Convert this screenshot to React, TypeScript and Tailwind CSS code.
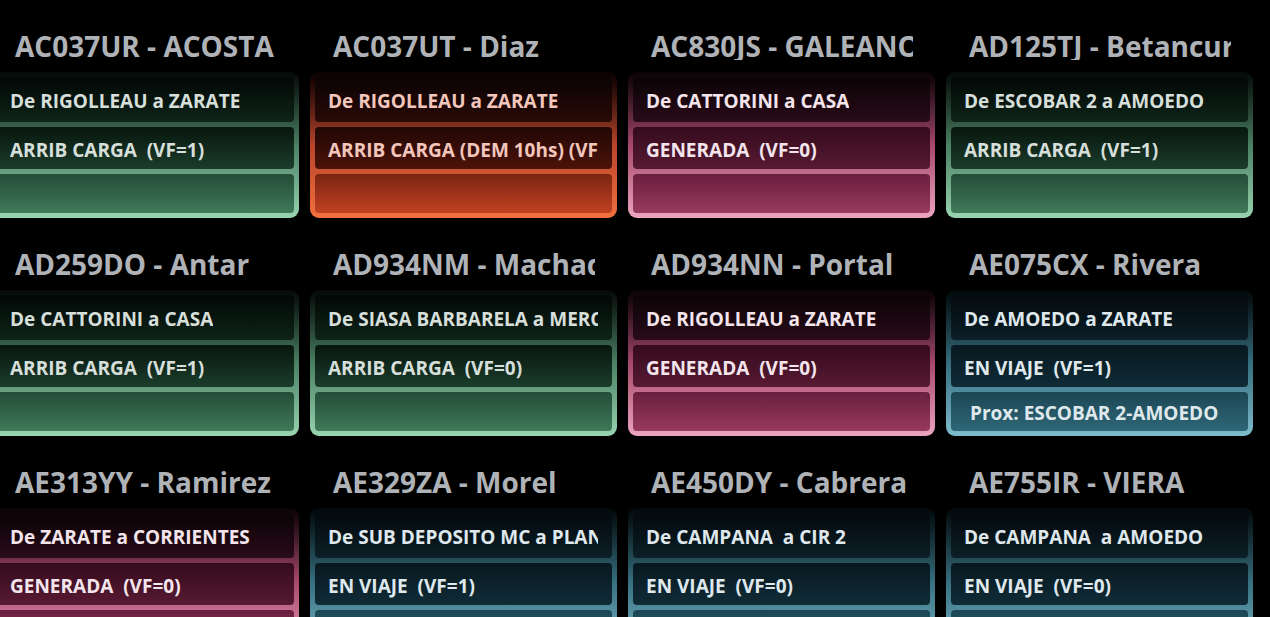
import React from 'react';

type Theme = {
  card: string;
  b1: string;
  b2: string;
  b3: string;
  text: string;
};

const themes: Record<string, Theme> = {
  green: {
    card: 'from-[#050a07] via-[#4a8063] to-[#98d4b0]',
    b1: 'from-[#030806] to-[#0f2419]',
    b2: 'from-[#08170f] to-[#1b3d2b]',
    b3: 'from-[#244c37] to-[#3f7a5a]',
    text: 'text-[#d6dfda]',
  },
  red: {
    card: 'from-[#0a0202] via-[#b8442a] to-[#f2703e]',
    b1: 'from-[#0a0303] to-[#2a0b07]',
    b2: 'from-[#220705] to-[#4c1309]',
    b3: 'from-[#7a2412] to-[#c24222]',
    text: 'text-[#f3c6bc]',
  },
  pink: {
    card: 'from-[#0a0306] via-[#a6486c] to-[#eba4c0]',
    b1: 'from-[#0b0407] to-[#2a0b19]',
    b2: 'from-[#350b1c] to-[#581a33]',
    b3: 'from-[#6a1f3e] to-[#983a5c]',
    text: 'text-[#f4e5ec]',
  },
  blue: {
    card: 'from-[#03080a] via-[#356e7e] to-[#7ebccd]',
    b1: 'from-[#040a0e] to-[#0c1f27]',
    b2: 'from-[#081820] to-[#102c37]',
    b3: 'from-[#1c4654] to-[#2f6777]',
    text: 'text-[#dfe8ec]',
  },
};

type Trip = {
  title: string;
  route: string;
  status: string;
  next?: string;
  theme: keyof typeof themes;
};

const trips: Trip[] = [
  { title: 'AC037UR - ACOSTA', route: 'De RIGOLLEAU a ZARATE', status: 'ARRIB CARGA  (VF=1)', theme: 'green' },
  { title: 'AC037UT - Diaz', route: 'De RIGOLLEAU a ZARATE', status: 'ARRIB CARGA (DEM 10hs) (VF=1)', theme: 'red' },
  { title: 'AC830JS - GALEANO', route: 'De CATTORINI a CASA', status: 'GENERADA  (VF=0)', theme: 'pink' },
  { title: 'AD125TJ - Betancur', route: 'De ESCOBAR 2 a AMOEDO', status: 'ARRIB CARGA  (VF=1)', theme: 'green' },
  { title: 'AD259DO - Antar', route: 'De CATTORINI a CASA', status: 'ARRIB CARGA  (VF=1)', theme: 'green' },
  { title: 'AD934NM - Machado', route: 'De SIASA BARBARELA a MERCEDES', status: 'ARRIB CARGA  (VF=0)', theme: 'green' },
  { title: 'AD934NN - Portal', route: 'De RIGOLLEAU a ZARATE', status: 'GENERADA  (VF=0)', theme: 'pink' },
  { title: 'AE075CX - Rivera', route: 'De AMOEDO a ZARATE', status: 'EN VIAJE  (VF=1)', next: 'Prox: ESCOBAR 2-AMOEDO', theme: 'blue' },
  { title: 'AE313YY - Ramirez', route: 'De ZARATE a CORRIENTES', status: 'GENERADA  (VF=0)', theme: 'pink' },
  { title: 'AE329ZA - Morel', route: 'De SUB DEPOSITO MC a PLANTA', status: 'EN VIAJE  (VF=1)', theme: 'blue' },
  { title: 'AE450DY - Cabrera', route: 'De CAMPANA  a CIR 2', status: 'EN VIAJE  (VF=0)', theme: 'blue' },
  { title: 'AE755IR - VIERA', route: 'De CAMPANA  a AMOEDO', status: 'EN VIAJE  (VF=0)', theme: 'blue' },
];

function Row({ className, children }: { className: string; children?: React.ReactNode }) {
  return (
    <div className={`flex items-center rounded-[4px] bg-gradient-to-b pl-[13px] pr-[14px] pt-[3px] ${className}`}>
      <div className="min-w-0 overflow-hidden whitespace-pre text-[19px] leading-[24px] font-bold">{children}</div>
    </div>
  );
}

function Tile({ trip }: { trip: Trip }) {
  const t = themes[trip.theme];

  return (
    <div className="flex flex-col h-[218px]">
      {/* Plate + driver */}
      <div className="h-[72px] pl-[23px] pr-[22px] pt-[32px]">
        <div className="text-[28px] leading-[28px] font-bold text-[#afb3b7] whitespace-nowrap overflow-hidden">
          {trip.title}
        </div>
      </div>

      {/* Card */}
      <div className={`h-[146px] rounded-[9px] bg-gradient-to-b ${t.card} p-[5px] flex flex-col gap-[5px]`}>
        <Row className={`h-[45px] ${t.b1} ${t.text}`}>{trip.route}</Row>
        <Row className={`h-[42px] ${t.b2} ${t.text}`}>{trip.status}</Row>
        <Row className={`flex-1 ${t.b3} ${t.text} pl-[19px] pt-[1px]`}>{trip.next ?? ''}</Row>
      </div>
    </div>
  );
}

export default function App() {
  return (
    <div
      className="w-[1270px] h-[617px] overflow-hidden bg-black"
      style={{ fontFamily: '"Open Sans", "Noto Sans", sans-serif' }}
    >
      <div className="grid grid-cols-[repeat(4,307px)] gap-x-[11px] ml-[-8px]">
        {trips.map((trip) => (
          <Tile key={trip.title} trip={trip} />
        ))}
      </div>
    </div>
  );
}
